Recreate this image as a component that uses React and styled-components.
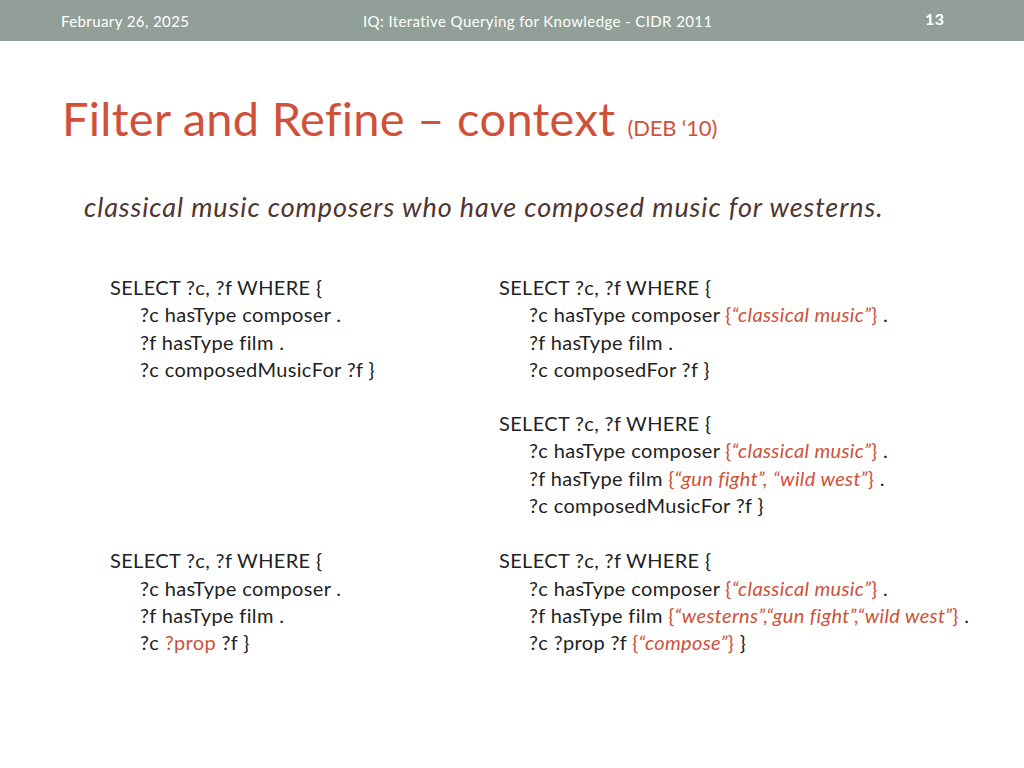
import styled, { createGlobalStyle } from "styled-components";

const Global = createGlobalStyle`
  body { margin: 0; background: #fff; font-family: Lato, "Open Sans", sans-serif; }
`;

const Slide = styled.div`
  width: 1024px;
  height: 768px;
  background: #fff;
`;

const Header = styled.header`
  height: 41px;
  background: #919f98;
  color: #fff;
  display: grid;
  grid-template-columns: 302px 460px 1fr;
  align-items: center;
  font-size: 15px;
  letter-spacing: 0.4px;
  padding-left: 61px;
  box-sizing: border-box;
`;

const Num = styled.span`
  font-weight: bold;
  font-size: 16px;
  margin-top: -4px;
  padding-left: 102px;
`;

const Title = styled.h1`
  margin: 49px 0 0 62px;
  font-weight: normal;
  font-size: 47px;
  letter-spacing: 0.3px;
  color: #cf5139;
  line-height: 56px;
`;

const Small = styled.span`
  font-size: 22px;
  letter-spacing: -0.2px;
`;

const Sub = styled.p`
  margin: 34px 0 0 84px;
  font-style: italic;
  font-size: 27px;
  letter-spacing: 0.9px;
  color: #503530;
`;

const Grid = styled.div`
  margin: 51px 0 0 110px;
  display: grid;
  grid-template-columns: 389px 1fr;
  grid-template-rows: auto auto auto;
  row-gap: 27px;
  color: #222;
  font-size: 20px;
  letter-spacing: 0.35px;
  line-height: 27.3px;
`;

const Block = styled.div`
  grid-row: ${(p) => p.row};
  margin-top: ${(p) => (p.row === 3 ? "1px" : "0")};
  white-space: nowrap;
`;

const Line = styled.div`
  padding-left: ${(p) => (p.indent ? "30px" : "0")};
`;

const Hi = styled.span`
  color: #cf5139;
`;

const HiI = styled(Hi)`
  font-style: italic;
`;

export default function App() {
  return (
    <Slide>
      <Global />
      <Header>
        <span>February 26, 2025</span>
        <span>IQ: Iterative Querying for Knowledge - CIDR 2011</span>
        <Num>13</Num>
      </Header>
      <Title>
        Filter and Refine – context <Small>(DEB ‘10)</Small>
      </Title>
      <Sub>classical music composers who have composed music for westerns.</Sub>
      <Grid>
        <Block row={1}>
          <Line>SELECT ?c, ?f WHERE {"{"}</Line>
          <Line indent>?c hasType composer .</Line>
          <Line indent>?f hasType film .</Line>
          <Line indent>?c composedMusicFor ?f {"}"}</Line>
        </Block>
        <Block row={1}>
          <Line>SELECT ?c, ?f WHERE {"{"}</Line>
          <Line indent>
            ?c hasType composer <Hi>{"{"}</Hi><HiI>“classical music”</HiI><Hi>{"}"}</Hi> .
          </Line>
          <Line indent>?f hasType film .</Line>
          <Line indent>?c composedFor ?f {"}"}</Line>
        </Block>
        <Block row={2} style={{ gridColumn: 2 }}>
          <Line>SELECT ?c, ?f WHERE {"{"}</Line>
          <Line indent>
            ?c hasType composer <Hi>{"{"}</Hi><HiI>“classical music”</HiI><Hi>{"}"}</Hi> .
          </Line>
          <Line indent>
            ?f hasType film <Hi>{"{"}</Hi><HiI>“gun fight”, “wild west”</HiI><Hi>{"}"}</Hi> .
          </Line>
          <Line indent>?c composedMusicFor ?f {"}"}</Line>
        </Block>
        <Block row={3}>
          <Line>SELECT ?c, ?f WHERE {"{"}</Line>
          <Line indent>?c hasType composer .</Line>
          <Line indent>?f hasType film .</Line>
          <Line indent>
            ?c <Hi>?prop</Hi> ?f {"}"}
          </Line>
        </Block>
        <Block row={3}>
          <Line>SELECT ?c, ?f WHERE {"{"}</Line>
          <Line indent>
            ?c hasType composer <Hi>{"{"}</Hi><HiI>“classical music”</HiI><Hi>{"}"}</Hi> .
          </Line>
          <Line indent>
            ?f hasType film <Hi>{"{"}</Hi><HiI>“westerns”,“gun fight”,“wild west”</HiI><Hi>{"}"}</Hi> .
          </Line>
          <Line indent>
            ?c ?prop ?f <Hi>{"{"}</Hi><HiI>“compose”</HiI><Hi>{"}"}</Hi> {"}"}
          </Line>
        </Block>
      </Grid>
    </Slide>
  );
}
